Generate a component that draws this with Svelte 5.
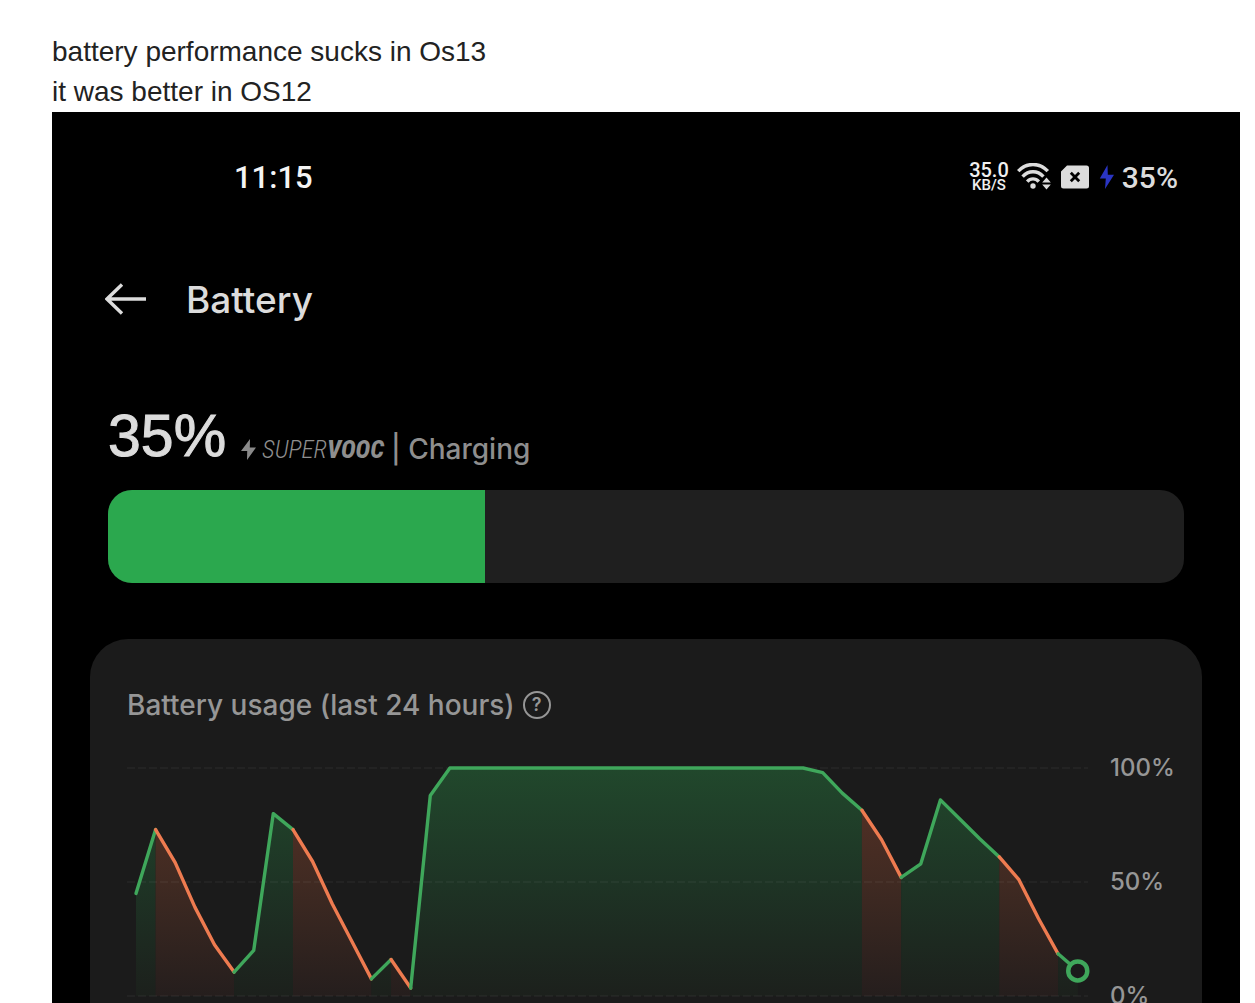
<script>
  const level = 35;

  // battery level every half hour, oldest first
  const levels = [
    45, 73, 58.5, 39, 22.5, 10.5, 20, 80, 73, 59, 40.5, 24, 7.5, 16, 3.5, 88,
    ...Array(19).fill(100),
    98, 89, 81.5, 68.5, 52, 58, 86, 77.5, 69, 61, 51, 34, 18.5, 11
  ];

  // [from, to, kind]
  const spans = [
    [0, 1, 'green'],
    [1, 5, 'orange'],
    [5, 8, 'green'],
    [8, 12, 'orange'],
    [12, 13, 'green'],
    [13, 14, 'orange'],
    [14, 37, 'green'],
    [37, 39, 'orange'],
    [39, 44, 'green'],
    [44, 47, 'orange'],
    [47, 48, 'green']
  ];

  const TOP = 16;
  const BASE = 244;
  const x = i => 9 + i * 19.62;
  const y = v => BASE - (v / 100) * (BASE - TOP);

  const line = ([from, to]) =>
    levels.slice(from, to + 1).map((v, i) => `${x(from + i).toFixed(1)},${y(v).toFixed(1)}`).join(' ');
  const area = span => `${x(span[0])},${BASE} ${line(span)} ${x(span[1])},${BASE}`;
</script>

<main class="post">
  <p class="text">battery performance sucks in Os13<br />it was better in OS12</p>

  <section class="phone">
    <div class="status">
      <time class="clock">11:15</time>
      <div class="indicators">
        <div class="speed"><span class="rate">35.0</span><span class="unit">KB/S</span></div>
        <svg class="wifi" viewBox="0 0 34 28" width="34" height="28" aria-hidden="true">
          <g fill="none" stroke="#dcdcdc" stroke-width="3.4">
            <path d="M1.200 8.200C9.500-.8 22.500-.8 30.800 8.200" />
            <path d="M5.600 13.600C11.500 7.200 20.500 7.200 26.400 13.600" />
            <path d="M10.200 18.600C13.500 15 18.500 15 21.800 18.600" />
          </g>
          <circle cx="16" cy="23" r="2.700" fill="#dcdcdc" />
          <path d="M29.500 14.500l4.300 5h-8.600zM29.500 26.500l4.300-5h-8.600z" fill="#dcdcdc" />
        </svg>
        <svg class="sim" viewBox="0 0 28 24" width="28" height="24" aria-hidden="true">
          <path d="M6 .5h19.500a2.500 2.500 0 0 1 2.500 2.500v18a2.500 2.500 0 0 1-2.500 2.500H2.500A2.500 2.500 0 0 1 0 21V6.500z" fill="#dcdcdc" />
          <path d="M9.800 7.800l8.400 8.400M18.200 7.800l-8.400 8.400" stroke="#000" stroke-width="2.800" />
        </svg>
        <svg class="bolt" viewBox="0 0 16 24" width="16" height="24" aria-hidden="true">
          <path d="M8.500 0L.8 13.500h6L6 24l9-14.300H8.800z" fill="#2a35c4" />
        </svg>
        <span class="percent">35%</span>
      </div>
    </div>

    <header class="titlebar">
      <button class="back" aria-label="Back">
        <svg viewBox="0 0 42 32" width="42" height="32" aria-hidden="true">
          <path d="M41 16H2M17 1.500L2 16l15 14.500" fill="none" stroke="#dcdcdc" stroke-width="3.400" />
        </svg>
      </button>
      <h1>Battery</h1>
    </header>

    <div class="summary">
      <strong class="level">{level}%</strong>
      <div class="charging">
        <svg class="flash" viewBox="0 0 15 23" width="15" height="23" aria-hidden="true">
          <path d="M9 1L0 13h6.200L6 22l9-12.500H8.800z" fill="#8a8a8a" />
        </svg>
        <span class="vooc">SUPER<b>VOOC</b></span>
        <span class="state">| Charging</span>
      </div>
    </div>

    <div class="meter" role="progressbar" aria-label="Battery level" aria-valuenow={level} aria-valuemin="0" aria-valuemax="100">
      <div class="fill" style="width: {level}%"></div>
    </div>

    <section class="card">
      <div class="heading">
        <h2>Battery usage (last 24 hours)</h2>
        <button class="help" aria-label="Help">?</button>
      </div>

      <div class="chart">
        <svg class="plot" viewBox="0 0 963 260" aria-hidden="true">
          <defs>
            <linearGradient id="green" gradientUnits="userSpaceOnUse" x1="0" y1={TOP} x2="0" y2={BASE}>
              <stop offset="0" stop-color="#21482c" />
              <stop offset="0.500" stop-color="#1e3425" />
              <stop offset="1" stop-color="#1c201c" />
            </linearGradient>
            <linearGradient id="orange" gradientUnits="userSpaceOnUse" x1="0" y1={TOP} x2="0" y2={BASE}>
              <stop offset="0" stop-color="#583226" />
              <stop offset="0.500" stop-color="#402a22" />
              <stop offset="1" stop-color="#251e1d" />
            </linearGradient>
          </defs>
          {#each spans as span}
            <polygon points={area(span)} fill="url(#{span[2]})" />
          {/each}
          {#each [100, 50, 0] as v}
            <line class="grid" x1="0" x2="961" y1={y(v)} y2={y(v)} />
          {/each}
          {#each spans as span}
            <polyline class="line {span[2]}" points={line(span)} />
          {/each}
          <circle class="now" cx={x(48)} cy={y(11)} r="9.500" />
        </svg>
        <div class="scale">
          <span>100%</span>
          <span>50%</span>
          <span>0%</span>
        </div>
      </div>
    </section>
  </section>
</main>

<style>
:global(body) {
  margin: 0;
  background: #fff;
  overflow: hidden;
}

.post {
  box-sizing: border-box;
  display: flex;
  flex-direction: column;
  height: 100vh;
  padding: 32px 15px 0 52px;
  overflow: hidden;
  font-family: Inter, "Liberation Sans", sans-serif;
}

.text {
  flex: none;
  margin: 0;
  color: #222;
  font-family: "Liberation Sans", Arial, sans-serif;
  font-size: 28px;
  line-height: 40px;
}

.phone {
  flex: 1 0 auto;
  background: #000;
  color: #dcdcdc;
}

.status {
  display: flex;
  align-items: center;
  justify-content: space-between;
  height: 130px;
  padding: 0 62px 0 182px;
  font-family: Roboto, sans-serif;
  font-weight: 500;
}

.clock {
  color: #f4f4f4;
  font-size: 31px;
}

.indicators {
  display: flex;
  align-items: center;
}

.speed {
  display: flex;
  flex-direction: column;
  align-items: center;
  color: #f0f0f0;
}

.rate {
  font-size: 20px;
  line-height: 16px;
}

.unit {
  font-size: 15px;
  line-height: 14px;
}

.wifi {
  margin-left: 8px;
}

.sim {
  margin-left: 10px;
}

.bolt {
  margin: 0 7px 0 10px;
}

.percent {
  font-size: 30px;
}

.titlebar {
  display: flex;
  align-items: center;
  gap: 39px;
  height: 114px;
  padding-left: 53px;
}

.back {
  display: flex;
  padding: 0;
  border: 0;
  background: none;
}

h1, h2 {
  margin: 0;
  font-weight: 500;
}

h1 {
  font-size: 37px;
}

.summary {
  display: flex;
  align-items: flex-end;
  height: 122px;
  box-sizing: border-box;
  padding: 0 56px 4px;
  color: #8e8e8e;
}

.level {
  color: #dcdcdc;
  font-family: "Liberation Sans", Arial, sans-serif;
  font-size: 59px;
  font-weight: 400;
  line-height: 76px;
  -webkit-text-stroke: 1px #dcdcdc;
}

.charging {
  display: flex;
  align-items: center;
  height: 50px;
}

.flash {
  margin: 0 6px 0 15px;
}

.vooc {
  font-family: "Roboto Condensed", "Liberation Sans", sans-serif;
  font-size: 25px;
  font-style: italic;
  font-weight: 300;
}

.vooc b {
  font-weight: 800;
}

.state {
  margin-left: 7px;
  font-size: 28px;
  font-weight: 500;
}

.meter {
  height: 93px;
  margin: 12px 56px 0;
  border-radius: 24px;
  background: #1f1f1f;
  overflow: hidden;
}

.fill {
  height: 100%;
  background: #2ba84e;
}

.card {
  margin: 56px 38px 0;
  padding: 46px 20px 40px 37px;
  border-radius: 38px;
  background: #1b1b1b;
}

.heading {
  display: flex;
  align-items: center;
  gap: 8px;
  height: 40px;
  color: #969696;
}

h2 {
  font-size: 28px;
}

.help {
  width: 28px;
  height: 28px;
  padding: 0;
  border: 2px solid #969696;
  border-radius: 50%;
  background: none;
  color: #969696;
  font: 600 18px/24px Inter, sans-serif;
}

.chart {
  display: grid;
  grid-template-columns: 1fr 72px;
  gap: 20px;
  margin-top: 27px;
}

.plot {
  display: block;
  width: 100%;
}

.grid {
  stroke: #fff;
  stroke-opacity: 0.08;
  stroke-dasharray: 8 3;
}

.line {
  fill: none;
  stroke-width: 3.4;
  stroke-linejoin: round;
  stroke-linecap: round;
}

.line.green {
  stroke: #3fa75b;
}

.line.orange {
  stroke: #ee7b50;
}

.now {
  fill: #1b1b1b;
  stroke: #3fa75b;
  stroke-width: 4.5;
}

.scale {
  display: flex;
  flex-direction: column;
  justify-content: space-between;
  color: #969696;
  font-size: 24px;
  font-weight: 500;
  line-height: 32px;
}
</style>
